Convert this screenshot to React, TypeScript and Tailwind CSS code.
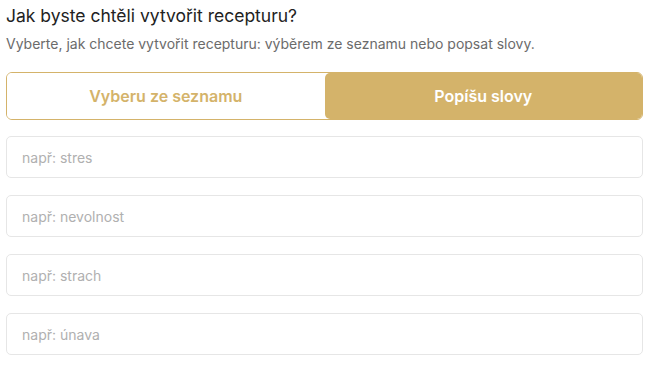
import React, { useState } from 'react';

const placeholders = ['např: stres', 'např: nevolnost', 'např: strach', 'např: únava'];

const App: React.FC = () => {
  const [mode, setMode] = useState<'list' | 'words'>('words');
  const [values, setValues] = useState(['', '', '', '']);

  const updateValue = (index: number, value: string) => {
    const next = [...values];
    next[index] = value;
    setValues(next);
  };

  return (
    <div className="min-h-screen bg-white pl-[6px] pr-[14px] pt-[4px] font-['Inter',sans-serif]">
      <h2 className="text-[17.5px] leading-[24px] text-[#222222]">Jak byste chtěli vytvořit recepturu?</h2>
      <p className="mt-[7px] text-[14px] leading-[18px] text-[#6b6b6b]">
        Vyberte, jak chcete vytvořit recepturu: výběrem ze seznamu nebo popsat slovy.
      </p>

      <div className="mt-[19px] flex h-[48px] rounded-[6px] border border-[#d4b36a]">
        <button
          type="button"
          onClick={() => setMode('list')}
          className={`flex-1 rounded-[5px] text-[16px] font-semibold ${
            mode === 'list' ? 'bg-[#d4b36a] text-white' : 'bg-white text-[#d4b36a]'
          }`}
        >
          Vyberu ze seznamu
        </button>
        <button
          type="button"
          onClick={() => setMode('words')}
          className={`flex-1 rounded-[5px] text-[16px] font-semibold ${
            mode === 'words' ? 'bg-[#d4b36a] text-white' : 'bg-white text-[#d4b36a]'
          }`}
        >
          Popíšu slovy
        </button>
      </div>

      <div className="mt-[16px] flex flex-col gap-[17px]">
        {placeholders.map((placeholder, index) => (
          <input
            key={index}
            value={values[index]}
            onChange={(e) => updateValue(index, e.target.value)}
            placeholder={placeholder}
            className="h-[42px] w-full rounded-[5px] border border-[#e6e6e6] px-[15px] text-[14px] text-[#333333] placeholder-[#b0b0b0] outline-none"
          />
        ))}
      </div>
    </div>
  );
};

export default App;
